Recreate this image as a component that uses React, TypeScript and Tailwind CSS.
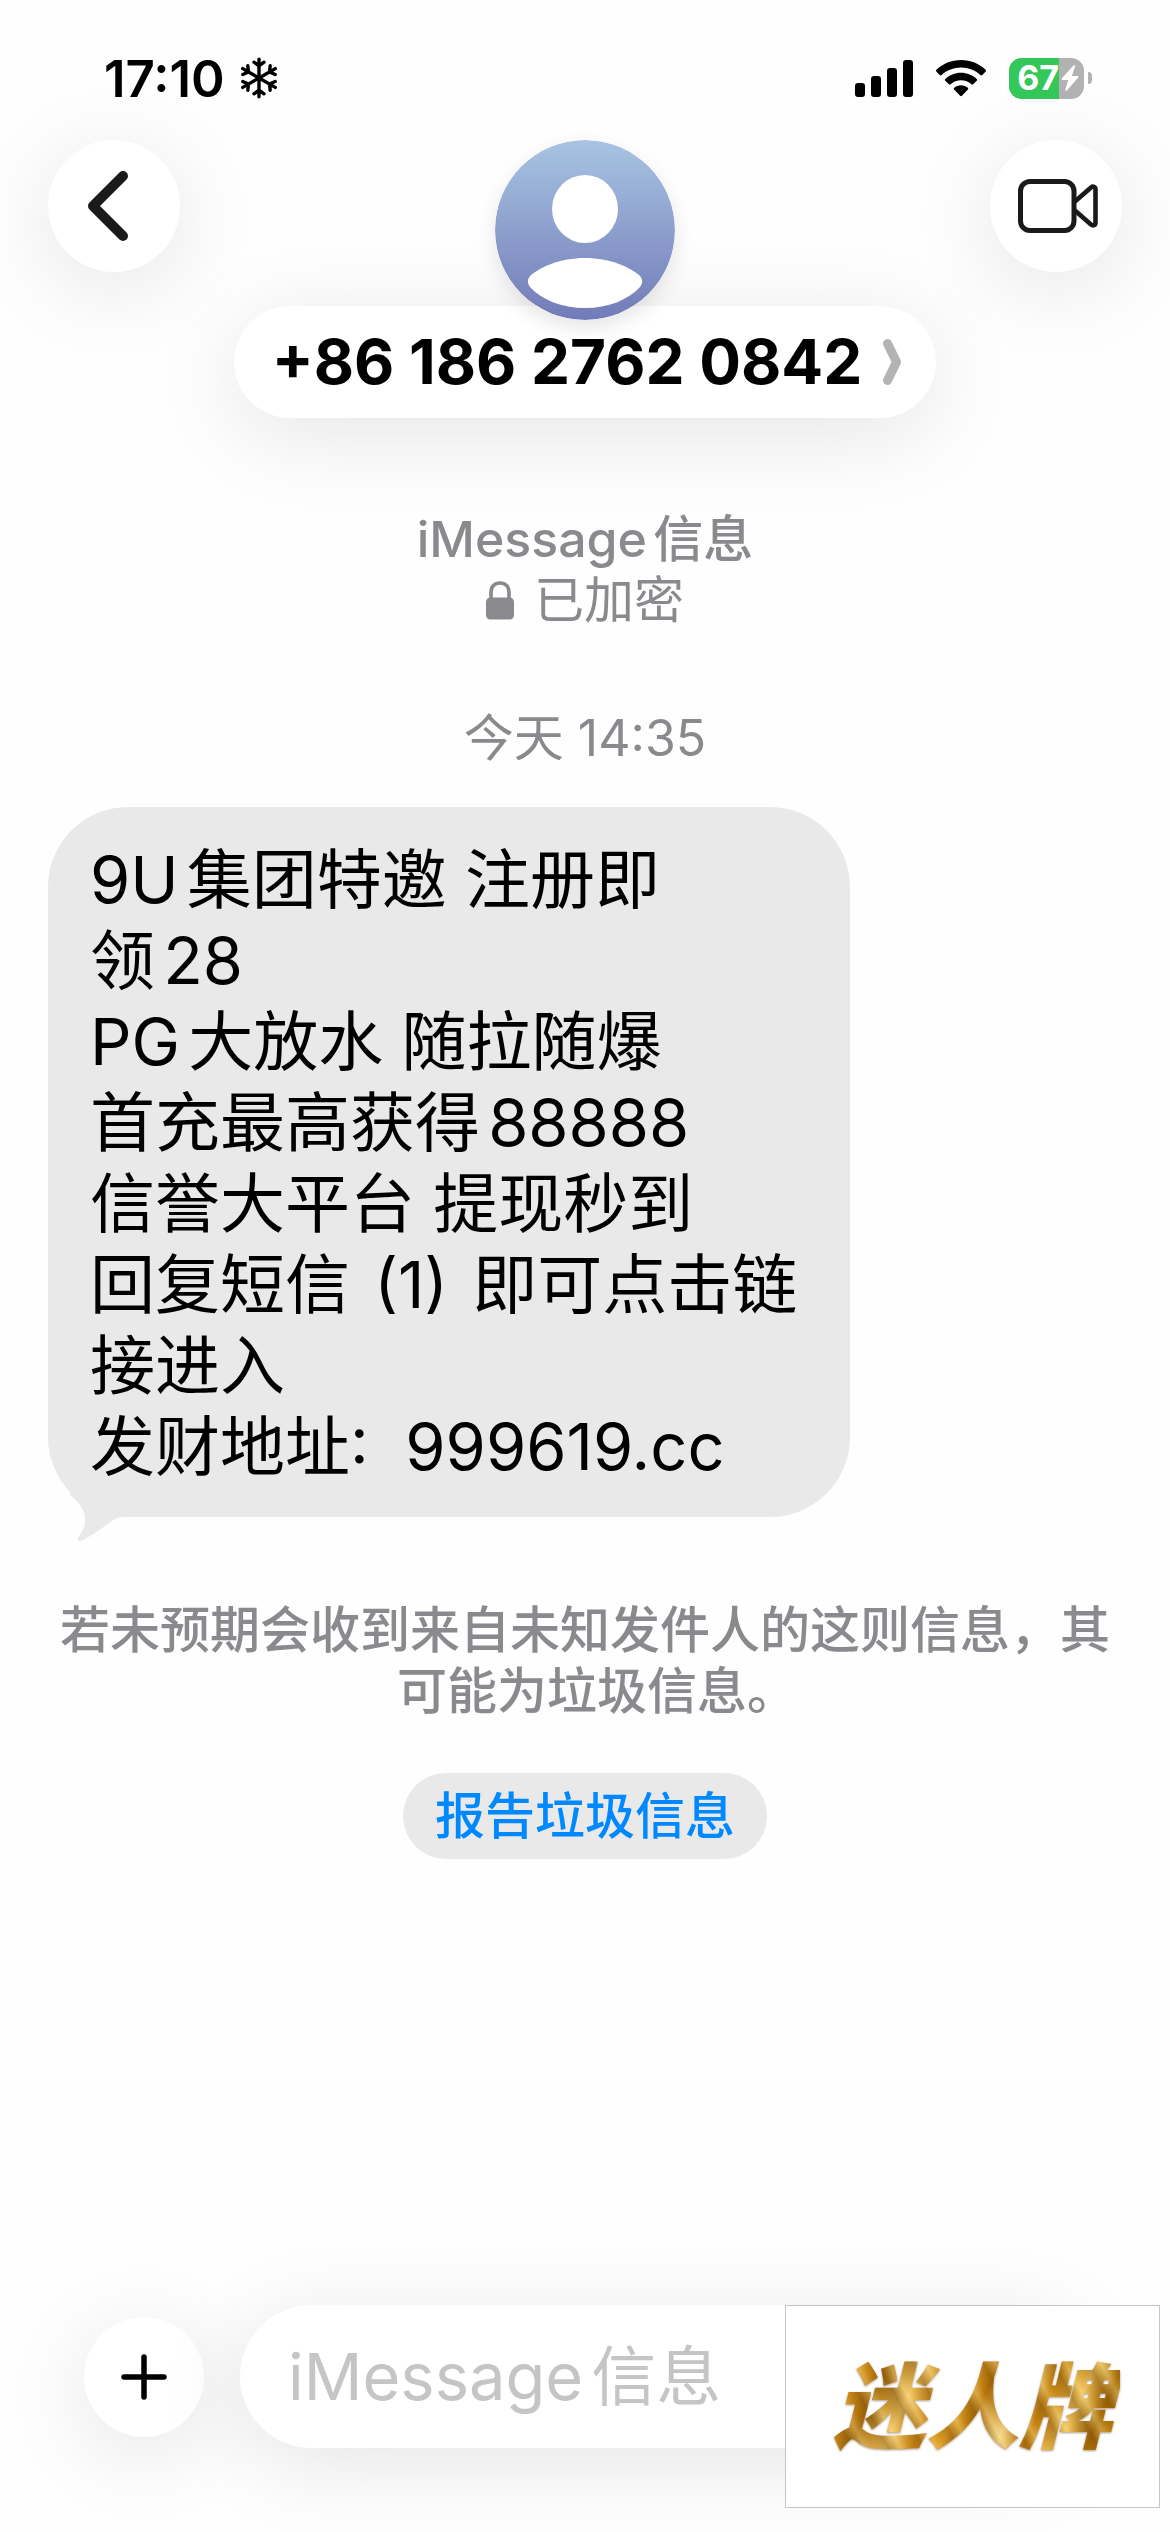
import React from "react";

const messageLines = [
  "9U集团特邀 注册即",
  "领28",
  "PG大放水 随拉随爆",
  "首充最高获得88888",
  "信誉大平台 提现秒到",
  "回复短信\u200a (1) \u200a即可点击链",
  "接进入",
  "发财地址:  999619.cc",
];

function Snowflake() {
  return (
    <svg className="h-[42px] w-9" viewBox="0 0 36 42" fill="none" stroke="currentColor" strokeWidth="3.4" strokeLinecap="round" strokeLinejoin="round" aria-hidden="true">
      {[0, 60, 120, 180, 240, 300].map((angle) => (
        <path key={angle} transform={`rotate(${angle} 18 21)`} d="M18 21V2.2M13 5.2l5 3.6 5-3.6" />
      ))}
    </svg>
  );
}

function Signal() {
  return (
    <svg className="h-[37px] w-[58px]" viewBox="0 0 58 37" fill="currentColor" aria-label="信号">
      <rect x="0" y="23" width="10" height="14" rx="3" />
      <rect x="16" y="16" width="10" height="21" rx="3" />
      <rect x="32" y="8" width="10" height="29" rx="3" />
      <rect x="48" y="0" width="10" height="37" rx="3" />
    </svg>
  );
}

function Wifi() {
  return (
    <svg className="h-[37px] w-[50px]" viewBox="0 0 50 37" fill="currentColor" aria-label="Wi-Fi">
      <path d="M25 0C34.500 0 43.200 3.700 49.600 9.700c.6.600.6 1.300.1 1.900l-3.400 3.400c-.6.600-1.300.6-1.900 0C39.200 10.300 32.400 7.500 25 7.500S10.800 10.300 5.600 15c-.6.600-1.300.6-1.900 0L.3 11.600c-.5-.6-.5-1.300.1-1.900C6.800 3.700 15.500 0 25 0Z" />
      <path d="M25 12.700c6 0 11.500 2.300 15.700 6.200.6.500.6 1.300 0 1.900l-3.500 3.400c-.5.500-1.200.5-1.800 0-2.800-2.500-6.400-4-10.400-4s-7.600 1.500-10.400 4c-.6.500-1.300.5-1.800 0l-3.500-3.400c-.6-.6-.6-1.400 0-1.900C13.500 15 19 12.700 25 12.700Z" />
      <path d="M25 25.300c2.600 0 4.900.9 6.800 2.400.6.500.6 1.200.1 1.800l-6 6.300c-.5.600-1.300.6-1.800 0l-6-6.300c-.5-.6-.5-1.300.1-1.800 1.900-1.500 4.200-2.400 6.800-2.400Z" />
    </svg>
  );
}

function Battery() {
  return (
    <div className="flex items-center gap-1" aria-label="电量 67%">
      <div className="flex h-[41px] w-[75px] overflow-hidden rounded-[13px] bg-[#b2b2b2]">
        <div className="flex w-[50px] items-center justify-end bg-[#34c759] text-[34px] leading-none font-bold text-white">67</div>
        <div className="flex flex-1 items-center pl-0.5">
          <svg className="h-[26px] w-[18px]" viewBox="0 0 18 26" fill="#fff" aria-hidden="true">
            <path d="M12.200.7 1 13.200c-.9 1-.5 1.800.7 1.800h5.500L4.300 24.200c-.4 1.500.8 2.100 1.800 1L17 12.700c.9-1 .5-1.800-.7-1.800h-5.500L14 1.800C14.500.3 13.200-.4 12.200.7Z" />
          </svg>
        </div>
      </div>
      <div className="h-3 w-1 rounded-r-full bg-[#b2b2b2]" />
    </div>
  );
}

function StatusBar() {
  return (
    <div className="flex h-[140px] items-start justify-between pt-12 pr-[78px] pl-[104px] text-black">
      <div className="flex h-[60px] items-center gap-4">
        <time className="text-[51px] leading-none font-semibold">17:10</time>
        <Snowflake />
      </div>
      <div className="flex h-[60px] items-center gap-[23px]">
        <Signal />
        <Wifi />
        <Battery />
      </div>
    </div>
  );
}

function Avatar() {
  return (
    <svg className="relative z-10 size-[180px] rounded-full shadow-[0_8px_20px_rgba(0,0,0,0.1)]" viewBox="0 0 180 180" aria-hidden="true">
      <defs>
        <linearGradient id="avatarFill" x1="0" y1="0" x2="0" y2="1">
          <stop offset="0" stopColor="#a8c4e2" />
          <stop offset="1" stopColor="#727bb8" />
        </linearGradient>
      </defs>
      <circle cx="90" cy="90" r="90" fill="url(#avatarFill)" />
      <ellipse cx="90" cy="69" rx="33" ry="34" fill="#fff" />
      <path d="M90 118c25 0 44 9 54 17 4 4 4 8 1 12-12 13-32 21-55 21s-43-8-55-21c-3-4-3-8 1-12 10-8 29-17 54-17Z" fill="#fff" />
    </svg>
  );
}

function Header() {
  return (
    <header className="flex items-start justify-between px-12">
      <button type="button" aria-label="返回" className="flex size-[132px] items-center justify-center rounded-full bg-white pr-[12px] text-[#1a1a1a] shadow-[0_16px_90px_rgba(0,0,0,0.1)]">
        <svg className="h-[70px] w-[42px]" viewBox="0 0 42 70" fill="none" stroke="currentColor" strokeWidth="10" strokeLinecap="round" strokeLinejoin="round" aria-hidden="true">
          <path d="M36 5 6 35l30 30" />
        </svg>
      </button>
      <div className="flex flex-col items-center">
        <Avatar />
        <button type="button" className="-mt-[14px] flex h-[112px] w-[702px] items-center justify-center gap-5 rounded-full bg-white pl-1 text-[62px] leading-none font-bold whitespace-nowrap text-black shadow-[0_16px_90px_rgba(0,0,0,0.1)]">
          +86 186 2762 0842
          <svg className="h-[48px] w-5" viewBox="0 0 20 48" fill="none" stroke="#b3b3b3" strokeWidth="9" strokeLinecap="round" strokeLinejoin="round" aria-hidden="true">
            <path d="M5.500 5.500l9 18.500-9 18.500" />
          </svg>
        </button>
      </div>
      <button type="button" aria-label="视频通话" className="flex size-[132px] items-center justify-center rounded-full bg-white pl-1 text-[#1a1a1a] shadow-[0_16px_90px_rgba(0,0,0,0.1)]">
        <svg className="h-[54px] w-20" viewBox="0 0 80 54" fill="none" stroke="currentColor" strokeWidth="5" strokeLinecap="round" strokeLinejoin="round" aria-hidden="true">
          <rect x="2.500" y="2.500" width="53.500" height="49" rx="9.500" />
          <path strokeWidth="4.600" d="M57.500 22 73 8.500c2-1.700 4.500-.8 4.500 1.800v33.400c0 2.600-2.500 3.500-4.500 1.800L57.500 32" />
        </svg>
      </button>
    </header>
  );
}

function Bubble() {
  return (
    <div className="relative w-[802px] max-w-full rounded-[80px] bg-[#e9e9e9] pt-8 pr-5 pb-[30px] pl-[42px] text-[65px] leading-[81px] text-black [text-autospace:normal]">
      {messageLines.map((line) => (
        <p key={line} className="whitespace-pre-wrap">{line}</p>
      ))}
      <svg className="absolute -bottom-6 left-5 h-[60px] w-[70px]" viewBox="0 0 70 60" fill="#e9e9e9" aria-hidden="true">
        <path d="M2 14C12 22 17 29 17 40c0 6-2 9-6 15-3 5 0 6 4 4 14-7 22-15 32-21 3-2 7-2 23-2V0H2Z" />
      </svg>
    </div>
  );
}

function Composer() {
  return (
    <form className="flex items-center gap-9 px-[84px] pb-[84px]">
      <button type="button" aria-label="添加" className="flex size-[120px] shrink-0 items-center justify-center rounded-full bg-white text-black shadow-[0_16px_90px_rgba(0,0,0,0.1)]">
        <svg className="size-[46px]" viewBox="0 0 46 46" stroke="currentColor" strokeWidth="5.500" strokeLinecap="round" aria-hidden="true">
          <path d="M23 3v40M3 23h40" />
        </svg>
      </button>
      <input type="text" aria-label="iMessage信息" placeholder="iMessage信息" className="h-[143px] min-w-0 flex-1 rounded-full bg-white px-12 text-[65px] text-black shadow-[0_16px_90px_rgba(0,0,0,0.1)] outline-none [text-autospace:normal] placeholder:text-[#c5c5c7]" />
    </form>
  );
}

export default function App() {
  return (
    <div className="relative flex min-h-screen flex-col overflow-hidden bg-[#fefefe] font-['Inter','Noto_Sans_CJK_SC',sans-serif]">
      <StatusBar />
      <Header />
      <main className="flex flex-1 flex-col px-12 pt-[91px]">
        <div className="flex flex-col items-center text-[50px] leading-[61px] text-[#8a8a8e] [text-autospace:normal]">
          <p className="font-medium">iMessage信息</p>
          <p className="flex items-center gap-5">
            <svg className="h-[39px] w-7" viewBox="0 0 28 39" aria-hidden="true">
              <path d="M5 19V11.500C5 5.500 8.500 2 14 2s9 3.500 9 9.500V19" fill="none" stroke="currentColor" strokeWidth="3.600" />
              <rect x="0" y="16.500" width="28" height="22" rx="4.500" fill="currentColor" />
            </svg>
            已加密
          </p>
          <time className="mt-[77px] mb-[38px]">今天 14:35</time>
        </div>
        <Bubble />
        <p className="-mx-6 mt-[83px] text-center text-[50px] leading-[61px] font-medium text-[#8a8a8e]">
          <span className="block">若未预期会收到来自未知发件人的这则信息，其</span>
          <span className="block pl-6">可能为垃圾信息。</span>
        </p>
        <button type="button" className="mt-[51px] h-[86px] self-center rounded-full bg-[#e9e9e9] px-8 text-[50px] leading-none font-medium text-[#0088ff]">
          报告垃圾信息
        </button>
      </main>
      <Composer />
      <div className="absolute right-[10px] bottom-6 flex h-[203px] w-[375px] items-center justify-center border border-[#c6c6c6] bg-white">
        <span className="bg-[repeating-linear-gradient(62deg,rgba(120,70,0,0.45)_0px,rgba(255,225,140,0.35)_11px,rgba(200,120,0,0.2)_19px,rgba(120,70,0,0.4)_31px),linear-gradient(115deg,#b87a14_0%,#d99a20_12%,#a06a10_20%,#f0cc70_30%,#c98a1c_38%,#e2a52c_46%,#b0720b_52%,#f5dc94_62%,#c0800f_70%,#efc866_80%,#a06a09_88%,#d69a26_100%)] bg-clip-text px-2 text-[93px] leading-[110px] font-black text-transparent italic drop-shadow-[0_1px_1px_rgba(90,50,0,0.5)]">迷人牌</span>
      </div>
    </div>
  );
}
